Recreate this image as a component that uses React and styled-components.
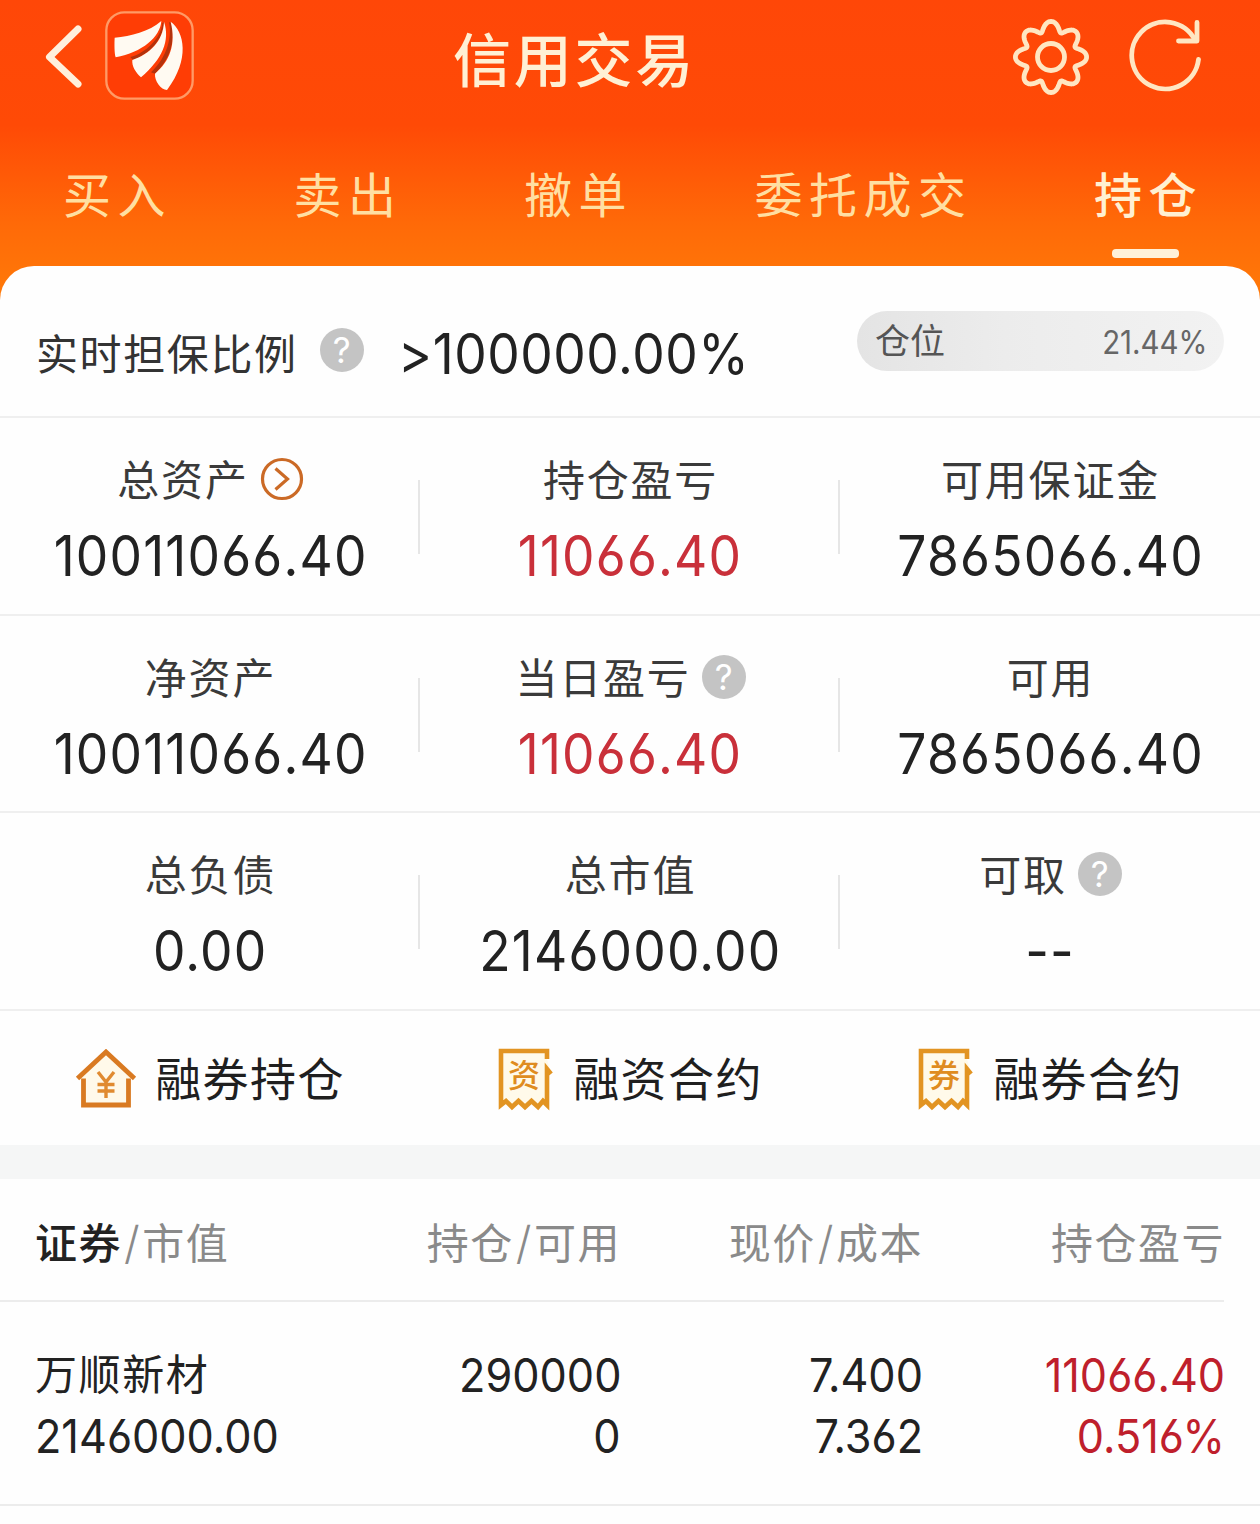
import React from 'react'
import styled, { createGlobalStyle } from 'styled-components';

const GlobalStyle = createGlobalStyle`
    * {
        box-sizing: border-box;
    }
    body {
        margin: 0;
        background-color: #fefefe;
        font-family: Inter, "Noto Sans CJK SC", sans-serif;
        font-feature-settings: "cv03";
        color: #222;
    }
`;

const Container = styled.div`
    width: 1260px;
    height: 1524px;
    overflow: hidden;
    background-color: #fefefe;
`;

/* narrow figures, squeezed towards the side they are aligned to */
const Num = styled.span`
    display: inline-block;
    transform: scaleX(0.92);
    transform-origin: ${(props) => props.$from || 'center'};
`;

/* header */
const Top = styled.div`
    height: 300px;
    background: linear-gradient(180deg, #ff4708 0, #ff4a06 125px, #ff6a08 225px, #ff7a08 300px);
`;
const TitleBar = styled.div`
    height: 134px;
    padding: 0 59px 20px 43px;
    display: grid;
    grid-template-columns: 1fr auto 1fr;
    align-items: center;
`;
const BarLeft = styled.div`
    display: flex;
    align-items: center;
    gap: 22px;
    margin-top: -4px;
`;
const BarRight = styled.div`
    display: flex;
    align-items: center;
    justify-content: flex-end;
    gap: 39px;
    margin-right: -2px;
`;
const Title = styled.h1`
    margin: 0 95px 0 0;
    font-size: 58px;
    font-weight: 500;
    line-height: 70px;
    letter-spacing: 2.8px;
    color: #fff0d4;
    padding-top: 7px;
`;
const Tabs = styled.div`
    display: flex;
    justify-content: space-between;
    padding: 28px 57px 0 63px;
`;
const Tab = styled.div`
    display: flex;
    flex-direction: column;
    align-items: center;
    font-size: 48px;
    line-height: 68px;
    letter-spacing: 6.5px;
    font-weight: ${(props) => (props.$active ? 500 : 400)};
    color: ${(props) => (props.$active ? '#fff0d2' : '#ffdfa2')};
`;
const TabLine = styled.span`
    width: 67px;
    height: 9px;
    margin: 19px 6px 0 0;
    border-radius: 4px;
    background-color: #fff1d8;
`;

/* account panel */
const Sheet = styled.div`
    position: relative;
    margin-top: -34px;
    border-radius: 34px 34px 0 0;
    background-color: #fefefe;
`;
const RatioRow = styled.div`
    height: 152px;
    padding: 0 36px;
    display: flex;
    align-items: flex-start;
    border-bottom: 2px solid #efefef;
`;
const RatioLabel = styled.span`
    margin-top: 59px;
    font-size: 42px;
    line-height: 60px;
    letter-spacing: 1.6px;
    color: #333;
`;
const RatioValue = styled.div`
    width: 360px;
    margin: 58px 0 0 34px;
    font-size: 56px;
    line-height: 60px;
    letter-spacing: 0.6px;
    white-space: nowrap;
`;
const Position = styled.div`
    width: 367px;
    height: 60px;
    margin: 45px 0 0 auto;
    padding: 0 16px 0 18px;
    display: flex;
    align-items: center;
    justify-content: space-between;
    border-radius: 30px;
    background: linear-gradient(90deg, #e4e4e4, #ececec 40%, #f2f2f2);
    font-size: 35px;
    line-height: 58px;
    color: #555;
`;
const PositionValue = styled.span`
    padding-top: 4px;
    font-size: 32px;
    color: #666;
`;
const Help = styled.span`
    width: 44px;
    height: 44px;
    margin: ${(props) => props.$margin || '-4px 0 0'};
    flex: none;
    display: inline-flex;
    align-items: center;
    justify-content: center;
    border-radius: 50%;
    background-color: #c4c4c4;
    color: #fff;
    font-size: 35px;
    letter-spacing: 0;
`;
const StatRow = styled.div`
    height: 197.5px;
    display: grid;
    grid-template-columns: repeat(3, 1fr);
    align-items: center;
    border-bottom: 2px solid #efefef;
`;
const Stat = styled.div`
    height: 100%;
    padding-top: 38px;
    display: flex;
    flex-direction: column;
    align-items: center;
    background: ${(props) =>
        props.$last ? 'none' : 'linear-gradient(#e6e6e6, #e6e6e6) right 62px / 2px 74px no-repeat'};
`;
const StatLabel = styled.div`
    display: flex;
    align-items: center;
    gap: 11px;
    padding-left: 1px;
    font-size: 42px;
    line-height: 50px;
    letter-spacing: 1.8px;
    color: #3a3a3a;
    & svg {
        margin-top: -4px;
    }
`;
const StatValue = styled.div`
    margin-top: 20px;
    padding-left: 1px;
    font-size: 56px;
    line-height: 60px;
    letter-spacing: 1.3px;
    color: ${(props) => (props.$red ? '#c9303a' : '#222')};
`;

/* shortcuts */
const Links = styled.div`
    height: 134px;
    display: grid;
    grid-template-columns: repeat(3, 1fr);
`;
const LinkItem = styled.div`
    display: flex;
    align-items: center;
    justify-content: center;
    gap: ${(props) => props.$gap}px;
    padding-top: 2px;
    font-size: 46px;
    line-height: 60px;
    letter-spacing: 1.4px;
    color: #1f1f1f;
    & svg {
        margin-top: 2px;
    }
`;
const Band = styled.div`
    height: 34px;
    background-color: #f5f6f6;
`;

/* holdings */
const Columns = styled.div`
    display: grid;
    grid-template-columns: 286px 300px 302px 302px;
    padding-left: 35px;
    text-align: right;
`;
const HeadRow = styled(Columns)`
    width: 1224px;
    height: 123px;
    padding-top: 9px;
    align-items: center;
    border-bottom: 2px solid #ececec;
    font-size: 42px;
    line-height: 60px;
    letter-spacing: 1.5px;
    color: #8a8a8a;
`;
const Slash = styled.span`
    margin: 0 1px 0 2px;
    font-size: 45px;
    font-weight: 300;
    line-height: 1;
`;
const Left = styled.div`
    text-align: left;
`;
const Strong = styled.span`
    color: #222;
    font-weight: 500;
`;
const HoldRow = styled(Columns)`
    height: 204px;
    padding-top: 42px;
    align-items: start;
    border-bottom: 2px solid #ececec;
    font-size: 47px;
    line-height: 61px;
    letter-spacing: 0;
`;
const StockName = styled.div`
    font-size: 42px;
    letter-spacing: 1.6px;
`;
const Profit = styled.div`
    color: #bf1f2c;
`;

const gearPath = () => {
    let d = '';
    for (let i = 0; i < 240; i++) {
        const a = (i / 240) * Math.PI * 2;
        const r = 30.8 + 4.8 * Math.cos(8 * a);
        const t = a + 0.035 * Math.sin(8 * a);
        d += `${i ? 'L' : 'M'}${(39 + r * Math.sin(t)).toFixed(2)} ${(39 - r * Math.cos(t)).toFixed(2)}`;
    }
    return d + 'Z';
};

const BackIcon = () => (
    <svg width="40" height="66" viewBox="0 0 40 66" fill="none" stroke="#fff0dc" strokeWidth="7" strokeLinecap="round" strokeLinejoin="round">
        <path d="M35 7L6.500 35L35 62" />
    </svg>
);

const Logo = () => (
    <svg width="89" height="89" viewBox="0 0 267 267">
        <rect x="4" y="4" width="259" height="259" rx="54" fill="#ff3d05" stroke="#ff9a66" strokeWidth="7" />
        <path d="M172 36C170 80 120 128 76 138L84 147C136 128 174 86 177 34Z" fill="#b3320c" />
        <path d="M192 34C204 90 176 150 138 184L150 188C192 150 214 90 198 34Z" fill="#b3320c" />
        <path d="M29 80C78 76 132 62 169 30C166 78 112 124 32 139C28 128 28 96 29 80Z" fill="#fffaf2" />
        <path d="M177 32C196 88 172 144 108 199C92 184 80 166 82 147C134 128 174 92 177 32Z" fill="#fffaf2" />
        <path d="M197 32C238 62 256 144 186 237C168 236 148 210 150 188C194 150 214 100 197 32Z" fill="#fffaf2" />
    </svg>
);

const GearIcon = () => (
    <svg width="78" height="78" viewBox="0 0 78 78" fill="none" stroke="#ffe6c2" strokeWidth="4.800" strokeLinejoin="round">
        <path d={gearPath()} />
        <circle cx="39" cy="39" r="13.500" />
    </svg>
);

const RefreshIcon = () => (
    <svg width="74" height="78" viewBox="0 0 74 78" fill="none" stroke="#ffe6c2" strokeWidth="4.800" strokeLinecap="round" strokeLinejoin="round">
        <path d="M69.500 41.500A33.500 33.500 0 1 1 66 22" />
        <path d="M68 4.500V23H49.500" />
    </svg>
);

const ArrowIcon = () => (
    <svg width="44" height="44" viewBox="0 0 44 44" fill="none" stroke="#cb6a26" strokeWidth="3.200">
        <circle cx="22" cy="22" r="19.500" />
        <path d="M15.500 11.500L27.500 22L15.500 32.500" />
    </svg>
);

const HouseIcon = () => (
    <svg width="62" height="62" viewBox="0 0 62 62" fill="none" stroke="#d97a22" strokeWidth="4.800">
        <path d="M8.500 29V56H53.500V29" fill="#fff9ea" />
        <path d="M2.500 29.500L31 3L59.500 29.500" fill="#fff9ea" />
        <path d="M23 23L31 33L39 23M31 33V49M22.500 35.500H39.500M22.500 42H39.500" stroke="#e08a30" strokeWidth="3.400" />
    </svg>
);

const BillText = styled.text`
    font-family: "Noto Sans CJK SC", sans-serif;
    font-size: 32px;
    font-weight: 500;
    letter-spacing: 0;
`;

const BillIcon = ({ text }) => (
    <svg width="56" height="64" viewBox="0 0 56 64" fill="none" stroke="#e29422" strokeWidth="4.600">
        <path
            d="M50 11V3H4V57L9 53L15 59L21.500 53L28 59L34.500 53L41 59L46 53L50 57V21L54 26"
            fill="#fffaea"
        />
        <BillText x="27" y="39" textAnchor="middle" fill="#df8c20" stroke="none">{text}</BillText>
    </svg>
);

const tabs = ['买入', '卖出', '撤单', '委托成交', '持仓'];

const stats = [
    [
        { label: '总资产', value: '10011066.40', icon: 'arrow' },
        { label: '持仓盈亏', value: '11066.40', red: true },
        { label: '可用保证金', value: '7865066.40' },
    ],
    [
        { label: '净资产', value: '10011066.40' },
        { label: '当日盈亏', value: '11066.40', red: true, icon: 'help' },
        { label: '可用', value: '7865066.40' },
    ],
    [
        { label: '总负债', value: '0.00' },
        { label: '总市值', value: '2146000.00' },
        { label: '可取', value: '--', icon: 'help' },
    ],
];

const App = () => {
  return (
    <Container>
        <GlobalStyle/>
        <Top>
            <TitleBar>
                <BarLeft>
                    <BackIcon/>
                    <Logo/>
                </BarLeft>
                <Title>信用交易</Title>
                <BarRight>
                    <GearIcon/>
                    <RefreshIcon/>
                </BarRight>
            </TitleBar>
            <Tabs>
                {tabs.map((tab) => (
                    <Tab key={tab} $active={tab === '持仓'}>
                        {tab}
                        {tab === '持仓' && <TabLine/>}
                    </Tab>
                ))}
            </Tabs>
        </Top>
        <Sheet>
            <RatioRow>
                <RatioLabel>实时担保比例</RatioLabel>
                <Help $margin="62px 0 0 22px">?</Help>
                <RatioValue><Num $from="left">&gt;100000.00%</Num></RatioValue>
                <Position>
                    仓位
                    <PositionValue><Num $from="right">21.44%</Num></PositionValue>
                </Position>
            </RatioRow>
            {stats.map((row, i) => (
                <StatRow key={i}>
                    {row.map((item, j) => (
                        <Stat key={item.label} $last={j === 2}>
                            <StatLabel>
                                {item.label}
                                {item.icon === 'arrow' && <ArrowIcon/>}
                                {item.icon === 'help' && <Help>?</Help>}
                            </StatLabel>
                            <StatValue $red={item.red}><Num>{item.value}</Num></StatValue>
                        </Stat>
                    ))}
                </StatRow>
            ))}
            <Links>
                <LinkItem $gap={18}><HouseIcon/>融券持仓</LinkItem>
                <LinkItem $gap={20}><BillIcon text="资"/>融资合约</LinkItem>
                <LinkItem $gap={20}><BillIcon text="券"/>融券合约</LinkItem>
            </Links>
        </Sheet>
        <Band/>
        <HeadRow>
            <Left><Strong>证券</Strong><Slash>/</Slash>市值</Left>
            <div>持仓<Slash>/</Slash>可用</div>
            <div>现价<Slash>/</Slash>成本</div>
            <div>持仓盈亏</div>
        </HeadRow>
        <HoldRow>
            <Left>
                <StockName>万顺新材</StockName>
                <Num $from="left">2146000.00</Num>
            </Left>
            <div><Num $from="right">290000</Num><br/><Num $from="right">0</Num></div>
            <div><Num $from="right">7.400</Num><br/><Num $from="right">7.362</Num></div>
            <Profit><Num $from="right">11066.40</Num><br/><Num $from="right">0.516%</Num></Profit>
        </HoldRow>
    </Container>
  )
}

export default App
